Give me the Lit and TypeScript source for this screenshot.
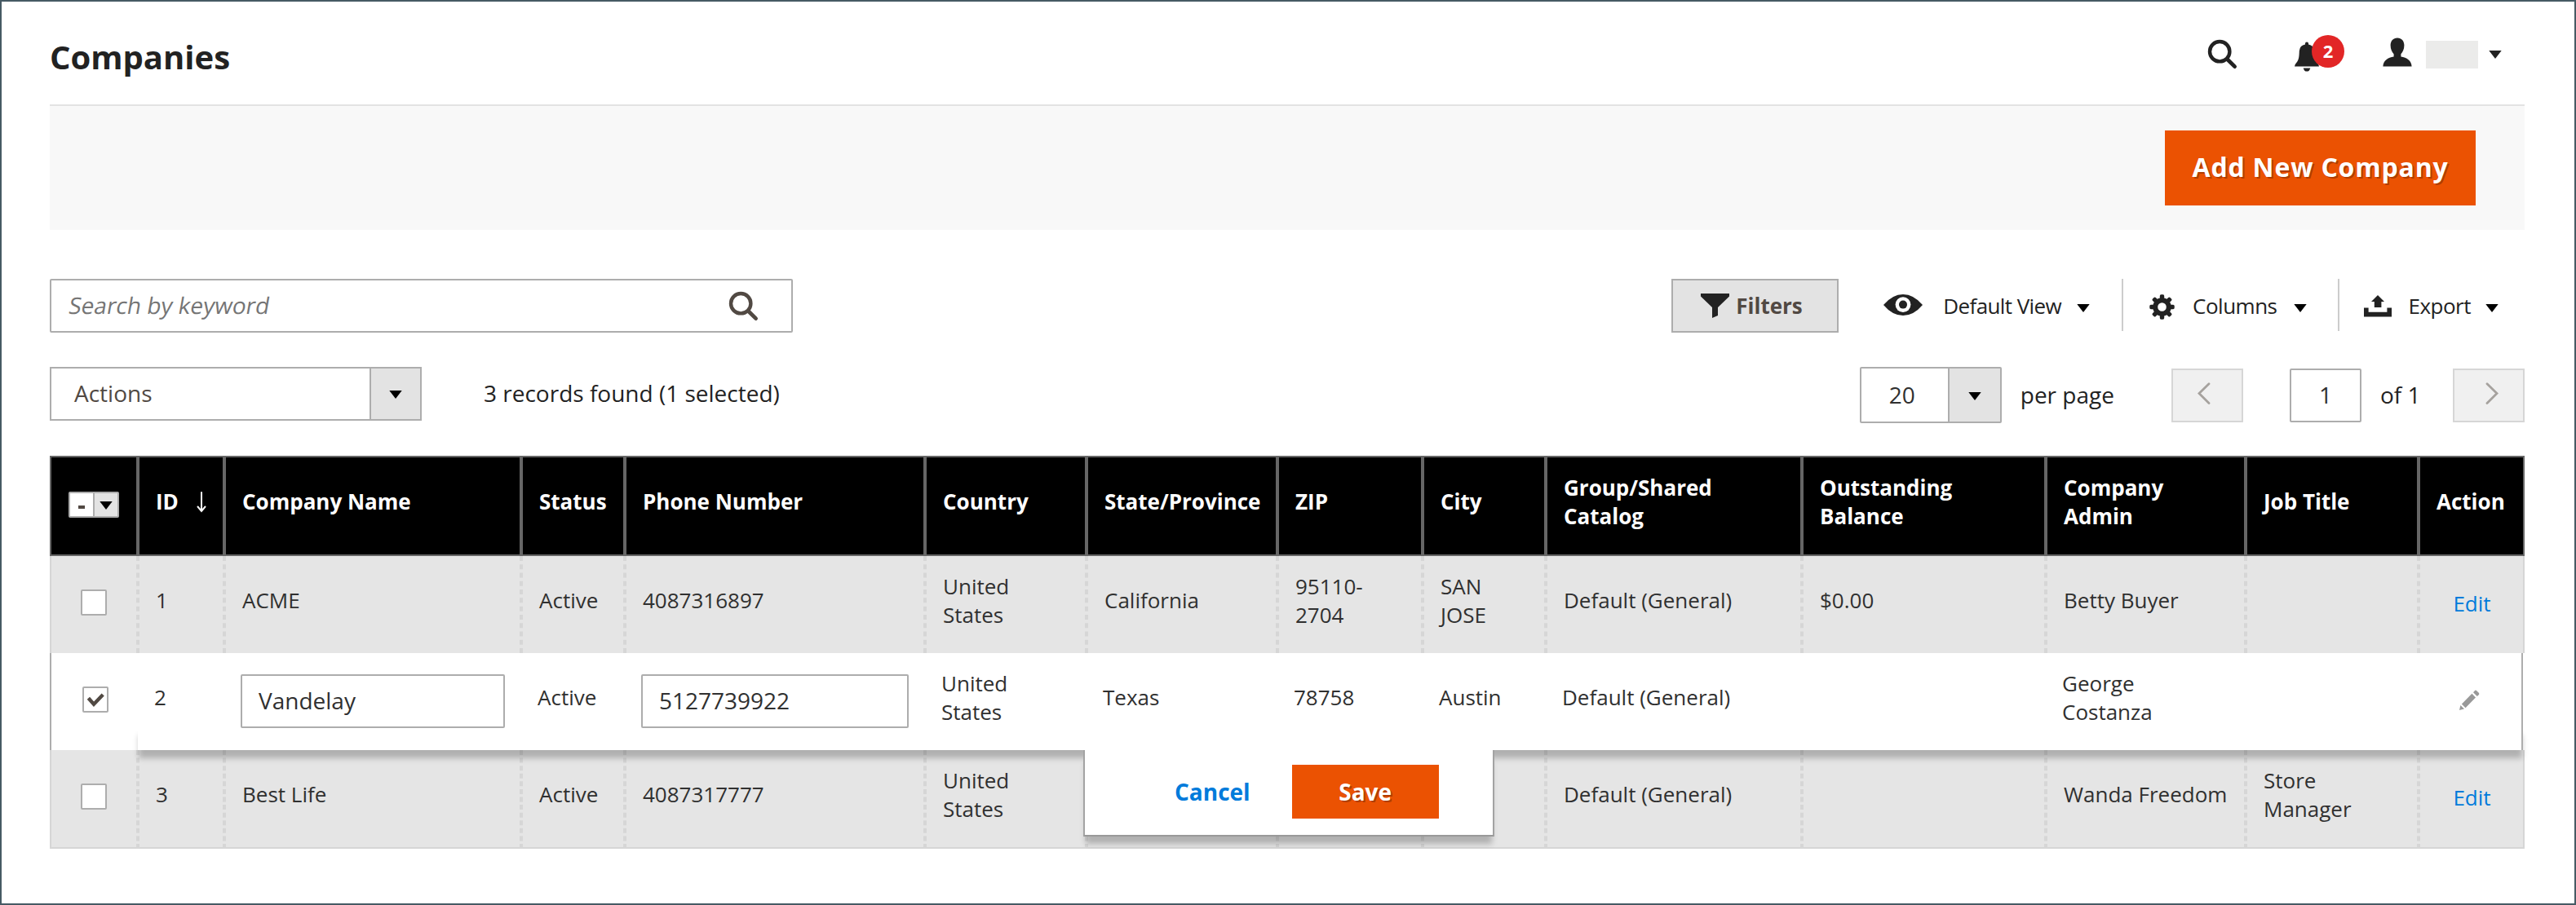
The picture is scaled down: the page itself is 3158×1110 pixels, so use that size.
import { LitElement, html, svg, css, nothing } from "lit";
import { customElement, property } from "lit/decorators.js";
import { classMap } from "lit/directives/class-map.js";

type Company = {
  id: string;
  name: string;
  status: string;
  phone: string;
  country: string;
  state: string;
  zip: string;
  city: string;
  group: string;
  balance: string;
  admin: string;
  job: string;
  editing?: boolean;
};

const columns: { key: keyof Company; label: string }[] = [
  { key: "id", label: "ID" },
  { key: "name", label: "Company Name" },
  { key: "status", label: "Status" },
  { key: "phone", label: "Phone Number" },
  { key: "country", label: "Country" },
  { key: "state", label: "State/Province" },
  { key: "zip", label: "ZIP" },
  { key: "city", label: "City" },
  { key: "group", label: "Group/Shared Catalog" },
  { key: "balance", label: "Outstanding Balance" },
  { key: "admin", label: "Company Admin" },
  { key: "job", label: "Job Title" },
];

const companies: Company[] = [
  { id: "1", name: "ACME", status: "Active", phone: "4087316897", country: "United States", state: "California", zip: "95110-2704", city: "SAN JOSE", group: "Default (General)", balance: "$0.00", admin: "Betty Buyer", job: "" },
  { id: "2", name: "Vandelay", status: "Active", phone: "5127739922", country: "United States", state: "Texas", zip: "78758", city: "Austin", group: "Default (General)", balance: "", admin: "George Costanza", job: "", editing: true },
  { id: "3", name: "Best Life", status: "Active", phone: "4087317777", country: "United States", state: "", zip: "", city: "", group: "Default (General)", balance: "", admin: "Wanda Freedom", job: "Store Manager" },
];

const caret = (color = "#000") => html`<svg class="caret" width="16" height="10" viewBox="0 0 16 10"><path d="M.3 0h15.4L8 10z" fill=${color} /></svg>`;

const magnifier = (color: string) => html`<svg width="37" height="37" viewBox="0 0 37 37">
  <circle cx="15.2" cy="15.2" r="12.2" fill="none" stroke=${color} stroke-width="4.4" />
  <path d="M24.6 24.8L33.6 33.6" stroke=${color} stroke-width="4.8" stroke-linecap="round" />
</svg>`;

const chevron = (d: string) => html`<svg width="16" height="28" viewBox="0 0 16 28"><path d=${d} fill="none" stroke="#a6a29e" stroke-width="2.8" stroke-linecap="round" /></svg>`;

const gearTeeth = [0, 45, 90, 135, 180, 225, 270, 315];

@customElement("page-header")
class PageHeader extends LitElement {
  static styles = css`
    :host { display: flex; justify-content: space-between; align-items: center; height: 126px; border-bottom: 2px solid #e3e3e3; color: #222; }
    h1 { margin: 0 0 4px; font-size: 40px; line-height: 54px; font-weight: 700; padding-top: 13px; }
    .tools { display: flex; align-items: center; padding-right: 28px; }
    svg { display: block; }
    .search { display: flex; margin: 2px 69px 0 0; }
    .bell { position: relative; margin-right: 77px; padding-top: 9px; }
    .badge { position: absolute; left: 22px; top: 1px; width: 40px; height: 40px; border-radius: 50%; background: #e22626; color: #fff; font-size: 22px; line-height: 38px; font-weight: 700; text-align: center; }
    .user { margin: -3px 17px 0 0; }
    .account { width: 64px; height: 34px; background: #ebebea; margin: 4px 13px 0 0; }
    .caret { margin-top: 4px; }
  `;
  render() {
    return html`
      <h1>Companies</h1>
      <div class="tools">
        <span class="search">${magnifier("#222")}</span>
        <span class="bell">
          <svg width="32" height="38" viewBox="0 0 32 38" fill="#222">
            <path d="M14 3.6V2.2Q14 .6 16 .6T18 2.2V3.6Q24.6 4.8 25.2 11.5C25.4 18 25.6 22.5 28.6 25.8Q31 28.4 31 30.4H1Q1 28.4 3.4 25.8C6.4 22.5 6.6 18 6.8 11.5Q7.4 4.8 14 3.6z" />
            <path d="M11.7 32.4H20.3Q19.2 36.6 16 36.6T11.7 32.4z" />
          </svg>
          <span class="badge">2</span>
        </span>
        <svg class="user" width="36" height="36" viewBox="0 0 36 36" fill="#222">
          <path d="M18 .4C23 .4 26.4 4 26.4 9.6C26.4 14.4 24.6 18.2 22.4 20.2V23.4C29.4 24.4 35.4 28.2 35.6 35.4H.4C.6 28.2 6.6 24.4 13.6 23.4V20.2C11.4 18.2 9.6 14.4 9.6 9.6C9.6 4 13 .4 18 .4z" />
        </svg>
        <span class="account"></span>
        ${caret("#222")}
      </div>`;
  }
}

@customElement("grid-toolbar")
class GridToolbar extends LitElement {
  static styles = css`
    :host { display: block; color: #222; font-size: 28px; line-height: 38px; }
    * { box-sizing: border-box; }
    svg { display: block; flex: none; }
    .row { display: flex; justify-content: space-between; align-items: flex-start; }
    .row + .row { margin-top: 42px; height: 109px; }
    .group { display: flex; }
    .search { display: flex; align-items: center; justify-content: space-between; width: 911px; height: 66px; border: 2px solid #adadad; border-radius: 2px; padding: 0 40px 0 20px; color: #757575; }
    .placeholder { transform: skewX(-10deg); transform-origin: 0 30px; margin-top: -2px; }
    .filters { display: flex; align-items: center; width: 205px; height: 66px; border: 2px solid #adadad; background: #e3e3e3; padding-left: 34px; gap: 8px; color: #514943; font-weight: 700; font-size: 26px; margin-right: 55px; }
    .link { display: flex; align-items: center; height: 64px; font-size: 26px; letter-spacing: -.5px; }
    .link + .link { border-left: 2px solid #ccc; }
    .link .label { padding-top: 2px; }
    .link .caret { margin-top: 7px; }
    .view { padding-right: 39px; }
    .view .label { margin: 0 19px 0 25px; letter-spacing: -.6px; }
    .cols { padding: 0 38px 0 32px; }
    .cols .label { margin: 0 20px 0 22px; }
    .exp { padding: 0 32px 0 30px; }
    .exp .label { margin: 0 18px 0 21px; }
    .gear { margin-top: 4px; }
    .tray { margin-top: 3px; }
    .select { display: flex; border: 2px solid #adadad; border-radius: 2px; background: #fff; }
    .select .value { flex: 1; display: flex; align-items: center; }
    .select .drop { display: flex; align-items: center; justify-content: center; background: #e3e3e3; border-left: 2px solid #adadad; }
    .select .drop .caret { margin-top: 2px; }
    .actions { width: 456px; height: 66px; color: #514943; border-radius: 0; }
    .actions .value { padding: 0 0 2px 28px; }
    .actions .drop { width: 62px; }
    .count { margin: 13px 0 0 76px; }
    .size { width: 174px; height: 69px; color: #303030; }
    .size .value { padding: 0 0 2px 34px; }
    .size .drop { width: 64px; }
    .per { margin: 15px 70px 0 23px; }
    .of { margin: 15px 39.5px 0 0; }
    .btn { width: 88px; height: 66px; margin-top: 2px; border: 2px solid #d6d6d6; background: #f0f0f0; display: flex; justify-content: center; padding: 15px 7px 0 0; }
    .btn.next { padding: 15px 0 0 7px; }
    .page { width: 88px; height: 66px; margin: 2px 23px 0 57px; border: 2px solid #adadad; border-radius: 2px; display: flex; align-items: center; justify-content: center; padding-bottom: 2px; color: #303030; }
  `;
  render() {
    return html`
      <div class="row">
        <div class="search"><span class="placeholder">Search by keyword</span>${magnifier("#514943")}</div>
        <div class="group">
          <div class="filters">
            <svg width="35" height="30" viewBox="0 0 35 30"><path d="M0 0H35V3.6L21 17V27L14 30V17L0 3.6z" fill="#222" /></svg>
            <span>Filters</span>
          </div>
          <div class="link view">
            <svg width="48" height="26" viewBox="0 0 48 26">
              <path d="M0 13Q11 0 24 0T48 13Q37 26 24 26T0 13z" fill="#222" />
              <circle cx="24" cy="12.6" r="9.4" fill="#fff" />
              <circle cx="24" cy="12.6" r="5" fill="#222" />
            </svg>
            <span class="label">Default View</span>${caret()}
          </div>
          <div class="link cols">
            <svg class="gear" width="31" height="31" viewBox="-15.5 -15.5 31 31">
              ${gearTeeth.map((a) => svg`<rect x="-2.7" y="-15.2" width="5.4" height="8" rx="1.6" transform="rotate(${a})" fill="#222" />`)}
              <circle r="8.3" fill="none" stroke="#222" stroke-width="6" />
            </svg>
            <span class="label">Columns</span>${caret()}
          </div>
          <div class="link exp">
            <svg class="tray" width="34" height="27" viewBox="0 0 34 27" fill="#222">
              <path d="M0 15.4H5.6V20.8H28.4V15.4H34V26.6H0z" />
              <path d="M17 0L25 8H21.4V15H12.8V8H9z" />
            </svg>
            <span class="label">Export</span>${caret()}
          </div>
        </div>
      </div>
      <div class="row">
        <div class="group">
          <div class="select actions"><span class="value">Actions</span><span class="drop">${caret()}</span></div>
          <span class="count">3 records found (1 selected)</span>
        </div>
        <div class="group">
          <div class="select size"><span class="value">20</span><span class="drop">${caret()}</span></div>
          <span class="per">per page</span>
          <div class="btn">${chevron("M14 1.8L2 13.6L14 25.4")}</div>
          <div class="page">1</div>
          <span class="of">of 1</span>
          <div class="btn next">${chevron("M2 1.8L14 13.6L2 25.4")}</div>
        </div>
      </div>`;
  }
}

@customElement("company-row")
class CompanyRow extends LitElement {
  @property({ attribute: false }) company!: Company;
  @property({ type: Boolean }) last = false;

  static styles = css`
    :host { display: block; }
    * { box-sizing: border-box; }
    .row { position: relative; display: grid; grid-template-columns: var(--columns); height: 119px; font-size: 26px; line-height: 35px; color: #303030; background: #e5e5e5; }
    .row.last { height: 121px; }
    .cell { display: flex; align-items: center; padding: 0 20px 10px; border-left: 2px dashed #d6d6d6; border-right: 2px dashed #d6d6d6; }
    .cell:first-of-type { border-left-style: solid; }
    .cell:last-of-type { border-right-style: solid; }
    .last .cell { border-bottom: 2px solid #d6d6d6; }
    .cell.check { padding: 0 0 5px; justify-content: center; }
    .cell.action { justify-content: center; padding: 0 0 2px 1px; color: #007bdb; }
    .box { width: 32px; height: 32px; background: #fff; border: 2px solid #adadad; border-radius: 2px; }
    .box svg { display: block; }
    .edit { z-index: 2; background: #fff; margin-right: 2px; border-right: 2px solid #adadad; grid-template-columns: var(--edit-columns); }
    .edit .cell { border: none; }
    .edit .cell:first-of-type { border-left: 2px solid #adadad; padding-left: 2px; }
    .edit .cell.action { padding: 0 2px 3px 0; }
    .edit .cell.entry { padding-bottom: 1px; }
    .entry span { width: 100%; height: 66px; border: 2px solid #adadad; border-radius: 2px; padding: 11px 20px; font-size: 28px; line-height: 38px; }
    .shade { position: absolute; left: 108px; right: -2px; bottom: 0; height: 30px; z-index: -1; box-shadow: 0 11px 7px -1px rgba(0, 0, 0, .23); }
    .panel { position: absolute; left: 1267px; top: 119px; width: 504px; height: 106px; border: 2px solid #a3a3a3; border-top: none; border-bottom-color: #999; background: #fff; display: flex; align-items: flex-start; padding: 18px 0 0 110px; font-size: 28px; line-height: 66px; font-weight: 700; color: #007bdb; box-shadow: 0 12px 7px -3px rgba(0, 0, 0, .23); }
    .save { margin-left: 51px; width: 180px; height: 66px; background: #eb5202; color: #fff; text-align: center; text-shadow: 2px 2px 0 rgba(0, 0, 0, .25); }
  `;
  render() {
    const c = this.company;
    const editing = !!c.editing;
    return html`<div class=${classMap({ row: true, edit: editing, last: this.last })}>
      <div class="cell check">
        <span class="box">${editing
          ? html`<svg width="28" height="28" viewBox="0 0 28 28"><path d="M5.4 12.2L12 19.8L23.2 8" fill="none" stroke="#514943" stroke-width="4.4" /></svg>`
          : nothing}</span>
      </div>
      ${columns.map(({ key }) =>
        editing && (key === "name" || key === "phone")
          ? html`<div class="cell entry"><span>${c[key]}</span></div>`
          : html`<div class="cell">${c[key]}</div>`
      )}
      <div class="cell action">${editing
        ? html`<svg width="26" height="26" viewBox="0 0 26 26" fill="#999"><path d="M1 25L2.4 18.9L7 23.5z" /><path d="M3.9 17.6L16.4 4.8L21 9.4L8.5 22.2z" /><path d="M18 3.2L19.8 1.2Q21 0 22.2 1.2L24.8 3.8Q26 5 24.8 6.2L22.8 8z" /></svg>`
        : "Edit"}</div>
      ${editing
        ? html`<i class="shade"></i>
            <section class="panel"><span>Cancel</span><span class="save">Save</span></section>`
        : nothing}
    </div>`;
  }
}

@customElement("company-grid")
class CompanyGrid extends LitElement {
  static styles = css`
    :host {
      display: block;
      --columns: 108px 106px 364px 127px 368px 198px 234px 178px 151px 314px 299px 245px 212px 130px;
      --edit-columns: 108px 106px 364px 127px 368px 198px 234px 178px 151px 314px 299px 245px 212px 126px;
    }
    * { box-sizing: border-box; }
    .head { display: grid; grid-template-columns: var(--columns); height: 123px; background: #000; color: #fff; font-size: 26px; line-height: 35px; font-weight: 700; }
    .cell { display: flex; align-items: center; padding: 0 20px 10px; border: 2px solid #666; white-space: nowrap; }
    .cell.wrap { white-space: normal; }
    .cell.check { padding: 0 0 3px; justify-content: center; }
    .multi { display: flex; width: 62px; height: 32px; border: 2px solid #adadad; border-radius: 2px; background: #fff; }
    .multi span { flex: 1; display: flex; align-items: center; justify-content: center; }
    .multi span + span { background: #e3e3e3; border-left: 2px solid #adadad; }
    .minus { width: 8px; height: 4px; background: #514943; margin-top: 5px; }
    .multi svg { margin-top: 2px; }
    .sort { margin: 0 0 0 22px; }
  `;
  render() {
    return html`
      <div class="head">
        <div class="cell check"><div class="multi"><span><i class="minus"></i></span><span>${caret()}</span></div></div>
        ${columns.map(({ key, label }) => html`<div class=${classMap({ cell: true, wrap: ["group", "balance", "admin"].includes(key) })}>
          ${label}${key === "id"
            ? html`<svg class="sort" width="12" height="26" viewBox="0 0 12 26"><path d="M6 1V24M1.5 18.5L6 24L10.5 18.5" fill="none" stroke="#fff" stroke-width="2" stroke-linecap="round" /></svg>`
            : nothing}</div>`)}
        <div class="cell">Action</div>
      </div>
      ${companies.map((c, i) => html`<company-row .company=${c} ?last=${i === companies.length - 1}></company-row>`)}`;
  }
}

@customElement("app-root")
class AppRoot extends LitElement {
  static styles = css`
    :host { display: block; box-sizing: border-box; height: 1110px; border: 2px solid #465a64; background: #fff; padding: 0 61px 0 59px; font-family: "Open Sans", sans-serif; }
    .bar { height: 152px; background: #f8f8f8; display: flex; justify-content: flex-end; padding: 30px 60px 0 0; box-sizing: border-box; margin-bottom: 60px; }
    .add { width: 381px; height: 92px; background: #eb5202; color: #fff; font-size: 32px; line-height: 90px; font-weight: 700; letter-spacing: .025em; text-align: center; text-shadow: 2px 2px 0 rgba(0, 0, 0, .25); }
  `;
  render() {
    return html`
      <page-header></page-header>
      <div class="bar"><div class="add">Add New Company</div></div>
      <grid-toolbar></grid-toolbar>
      <company-grid></company-grid>`;
  }
}
